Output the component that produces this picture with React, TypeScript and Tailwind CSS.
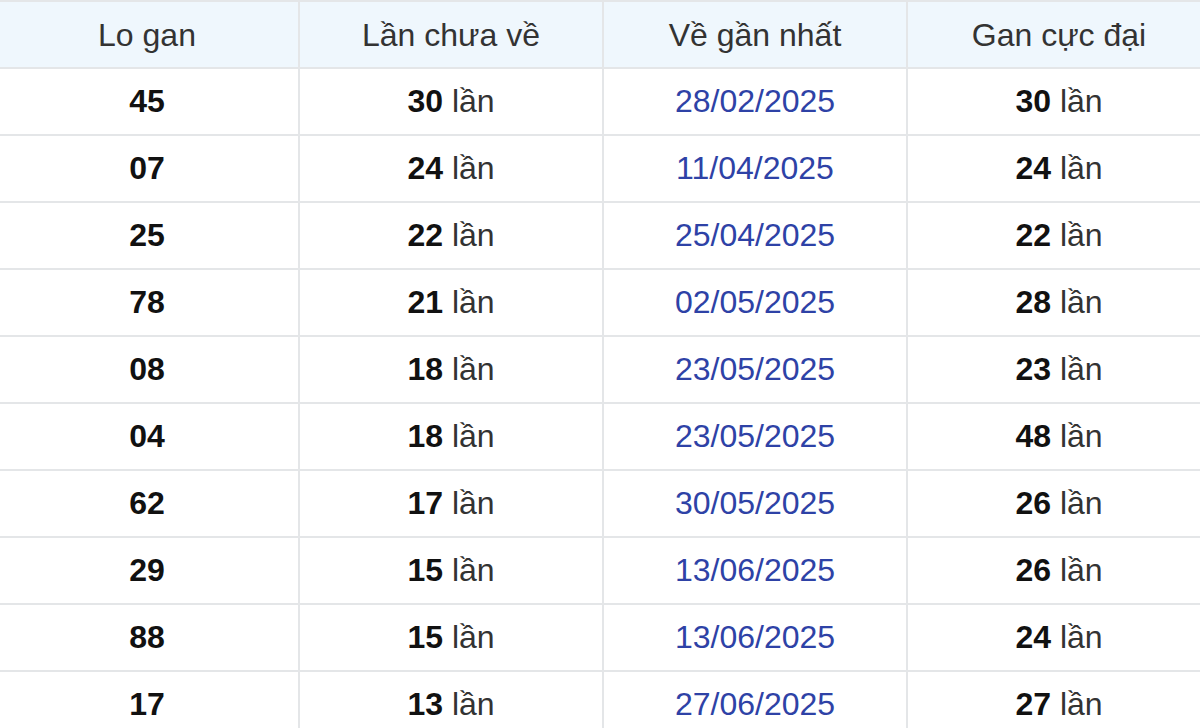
const rows = [
  ["45", "30", "28/02/2025", "30"],
  ["07", "24", "11/04/2025", "24"],
  ["25", "22", "25/04/2025", "22"],
  ["78", "21", "02/05/2025", "28"],
  ["08", "18", "23/05/2025", "23"],
  ["04", "18", "23/05/2025", "48"],
  ["62", "17", "30/05/2025", "26"],
  ["29", "15", "13/06/2025", "26"],
  ["88", "15", "13/06/2025", "24"],
  ["17", "13", "27/06/2025", "27"],
];

export default function App() {
  return (
    <div className="w-[1200px] h-[728px] overflow-hidden bg-white font-['Liberation_Sans',Arial,sans-serif] text-[32px]">
      <table className="-ml-[6px] w-[1218px] table-fixed border-collapse">
        <thead>
          <tr className="bg-[#eff7fd]">
            <th className="h-[67px] border-2 border-[#e4e6e8] font-normal text-[#333]">Lo gan</th>
            <th className="border-2 border-[#e4e6e8] font-normal text-[#333]">Lần chưa về</th>
            <th className="border-2 border-[#e4e6e8] font-normal text-[#333]">Về gần nhất</th>
            <th className="border-2 border-[#e4e6e8] font-normal text-[#333]">Gan cực đại</th>
          </tr>
        </thead>
        <tbody>
          {rows.map((r, i) => (
            <tr key={i}>
              <td className="h-[67px] border-2 border-[#e4e6e8] pb-[2px] text-center font-bold text-[#111]">{r[0]}</td>
              <td className="border-2 border-[#e4e6e8] pb-[2px] text-center text-[#333]">
                <b className="text-[#111]">{r[1]}</b> lần
              </td>
              <td className="border-2 border-[#e4e6e8] pb-[2px] text-center text-[#2e42a6]">{r[2]}</td>
              <td className="border-2 border-[#e4e6e8] pb-[2px] text-center text-[#333]">
                <b className="text-[#111]">{r[3]}</b> lần
              </td>
            </tr>
          ))}
        </tbody>
      </table>
    </div>
  );
}
